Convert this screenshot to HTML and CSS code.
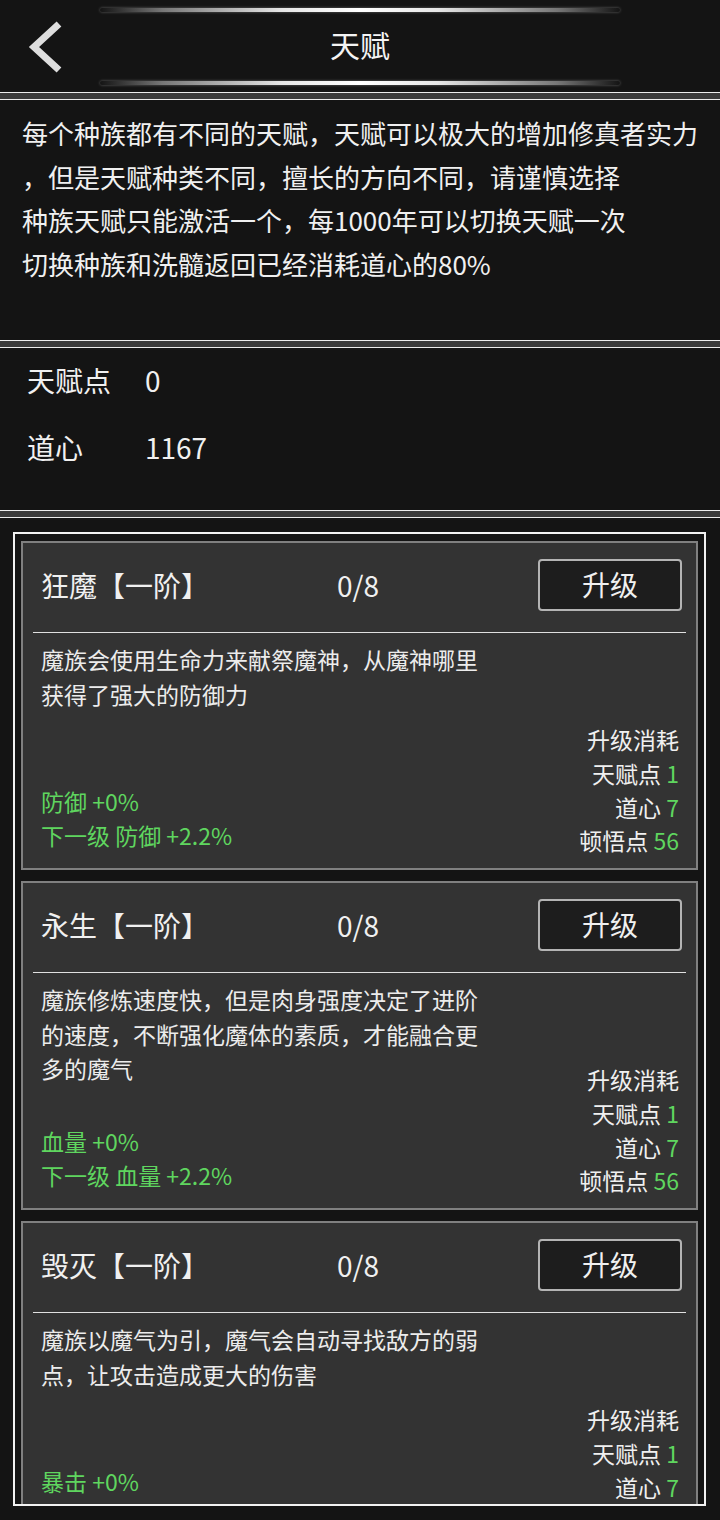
FILE: index.html
```html
<!DOCTYPE html>
<html lang="zh-CN">
<head>
<meta charset="utf-8">
<title>天赋</title>
<link rel="stylesheet" href="styles.css">
</head>
<body>
<div class="page">
  <header class="topbar">
    <div class="glow"></div>
    <div class="bar-row">
      <svg class="back" viewBox="0 0 36 54" width="36" height="54" aria-hidden="true">
        <polyline points="32,4 7,27 32,50" fill="none" stroke="#dedede" stroke-width="7" stroke-linejoin="miter"/>
      </svg>
      <h1 class="title">天赋</h1>
      <span class="bar-spacer"></span>
    </div>
    <div class="glow"></div>
  </header>
  <div class="sep"></div>
  <section class="intro">
    <div class="intro-line">每个种族都有不同的天赋，天赋可以极大的增加修真者实力</div>
    <div class="intro-line">，但是天赋种类不同，擅长的方向不同，请谨慎选择</div>
    <div class="intro-line">种族天赋只能激活一个，每1000年可以切换天赋一次</div>
    <div class="intro-line">切换种族和洗髓返回已经消耗道心的80%</div>
  </section>
  <div class="sep"></div>
  <section class="stats">
    <div class="stat-row"><span class="stat-label">天赋点</span><span class="stat-value">0</span></div>
    <div class="stat-row"><span class="stat-label">道心</span><span class="stat-value">1167</span></div>
  </section>
  <div class="sep"></div>
  <section class="list-panel">
    <div class="list-box">
      <div class="card">
        <div class="card-head">
          <span class="card-title">狂魔【一阶】</span>
          <span class="card-progress">0/8</span>
          <button class="btn">升级</button>
        </div>
        <div class="card-body">
          <p class="card-desc">魔族会使用生命力来献祭魔神，从魔神哪里获得了强大的防御力</p>
          <div class="card-foot">
            <div class="effects">
              <div>防御 +0%</div>
              <div>下一级 防御 +2.2%</div>
            </div>
            <div class="cost">
              <div>升级消耗</div>
              <div>天赋点 <span class="num">1</span></div>
              <div>道心 <span class="num">7</span></div>
              <div>顿悟点 <span class="num">56</span></div>
            </div>
          </div>
        </div>
      </div>
      <div class="card">
        <div class="card-head">
          <span class="card-title">永生【一阶】</span>
          <span class="card-progress">0/8</span>
          <button class="btn">升级</button>
        </div>
        <div class="card-body">
          <p class="card-desc">魔族修炼速度快，但是肉身强度决定了进阶的速度，不断强化魔体的素质，才能融合更多的魔气</p>
          <div class="card-foot">
            <div class="effects">
              <div>血量 +0%</div>
              <div>下一级 血量 +2.2%</div>
            </div>
            <div class="cost">
              <div>升级消耗</div>
              <div>天赋点 <span class="num">1</span></div>
              <div>道心 <span class="num">7</span></div>
              <div>顿悟点 <span class="num">56</span></div>
            </div>
          </div>
        </div>
      </div>
      <div class="card">
        <div class="card-head">
          <span class="card-title">毁灭【一阶】</span>
          <span class="card-progress">0/8</span>
          <button class="btn">升级</button>
        </div>
        <div class="card-body">
          <p class="card-desc">魔族以魔气为引，魔气会自动寻找敌方的弱点，让攻击造成更大的伤害</p>
          <div class="card-foot">
            <div class="effects">
              <div>暴击 +0%</div>
              <div>下一级 暴击 +2.2%</div>
            </div>
            <div class="cost">
              <div>升级消耗</div>
              <div>天赋点 <span class="num">1</span></div>
              <div>道心 <span class="num">7</span></div>
              <div>顿悟点 <span class="num">56</span></div>
            </div>
          </div>
        </div>
      </div>
    </div>
  </section>
</div>
</body>
</html>
```
FILE: styles.css
```css
* { box-sizing: border-box; }
html, body { margin: 0; padding: 0; }
body {
  background: #151515;
  color: #f0f0f0;
  font-family: "Noto Sans CJK SC", "Noto Sans", sans-serif;
}
.page {
  width: 720px;
  height: 1520px;
  display: flex;
  flex-direction: column;
  overflow: hidden;
}
.topbar {
  height: 92px;
  background: #141414;
  display: flex;
  flex-direction: column;
  padding: 8px 0 7px;
}
.glow {
  height: 4px;
  margin: 0 100px;
  border-radius: 2px;
  background: linear-gradient(90deg, rgba(255,255,255,0) 0%, rgba(200,200,200,0.55) 12%, #e6e6e6 35%, #ffffff 50%, #e6e6e6 65%, rgba(200,200,200,0.55) 88%, rgba(255,255,255,0) 100%);
  box-shadow: 0 0 3px rgba(255,255,255,0.35);
}
.bar-row {
  flex: 1;
  display: grid;
  grid-template-columns: 1fr auto 1fr;
  align-items: center;
}
.back {
  display: block;
  margin-left: 27px;
}
.title {
  margin: 0;
  font-size: 30px;
  font-weight: 400;
  line-height: 1;
  color: #f4f4f4;
  padding-bottom: 6px;
}
.sep {
  height: 8px;
  flex: 0 0 8px;
  background: #3a3a3a;
  border-top: 1px solid #ececec;
  border-bottom: 1px solid #ececec;
}
.intro {
  height: 240px;
  flex: 0 0 240px;
  background: #141414;
  padding: 11px 0 0 22px;
  font-size: 26px;
  line-height: 43.5px;
  color: #f0f0f0;
}
.intro-line { white-space: nowrap; }
.stats {
  height: 162px;
  flex: 0 0 162px;
  background: #141414;
  padding: 0 0 4px 27px;
  font-size: 28px;
}
.stat-row {
  height: 67px;
  display: flex;
  align-items: center;
  padding-bottom: 4px;
}
.stat-label { width: 118px; }
.list-panel {
  flex: 1;
  background: #141414;
  padding: 14px 14px 14px 13px;
}
.list-box {
  height: 974px;
  border: 2px solid #f2f2f2;
  padding: 7px 6px;
  overflow: hidden;
  display: flex;
  flex-direction: column;
  gap: 11px;
}
.card {
  flex: 0 0 329px;
  height: 329px;
  background: #333333;
  border: 2px solid #808080;
  padding: 0 10px;
  display: flex;
  flex-direction: column;
}
.card-head {
  height: 90px;
  flex: 0 0 90px;
  border-bottom: 1px solid #e0e0e0;
  display: flex;
  align-items: center;
  padding: 0 4px 5px 8px;
  font-size: 28px;
}
.card-title { width: 296px; white-space: nowrap; }
.card-progress { white-space: nowrap; }
.btn {
  margin-left: auto;
  width: 144px;
  height: 52px;
  background: #1d1d1d;
  border: 2px solid #b4b4b4;
  border-radius: 4px;
  color: #f0f0f0;
  font-family: inherit;
  font-size: 28px;
  line-height: 1;
  padding: 0 0 2px;
}
.card-body {
  flex: 1;
  display: grid;
  grid-template-columns: 1fr;
  grid-template-rows: 1fr;
  padding: 9px 7px 9px 8px;
}
.card-desc {
  grid-area: 1 / 1;
  align-self: start;
  margin: 0;
  max-width: 442px;
  font-size: 23px;
  line-height: 34.5px;
  color: #ececec;
}
.card-foot {
  grid-area: 1 / 1;
  align-self: end;
  display: flex;
  justify-content: space-between;
  align-items: flex-end;
}
.effects {
  color: #5fd65f;
  font-size: 23px;
  line-height: 34px;
  padding-bottom: 7px;
  white-space: nowrap;
}
.cost {
  text-align: right;
  font-size: 23px;
  line-height: 33.7px;
  color: #f0f0f0;
  white-space: nowrap;
  padding-bottom: 1px;
}
.num { color: #5fd65f; }
```
